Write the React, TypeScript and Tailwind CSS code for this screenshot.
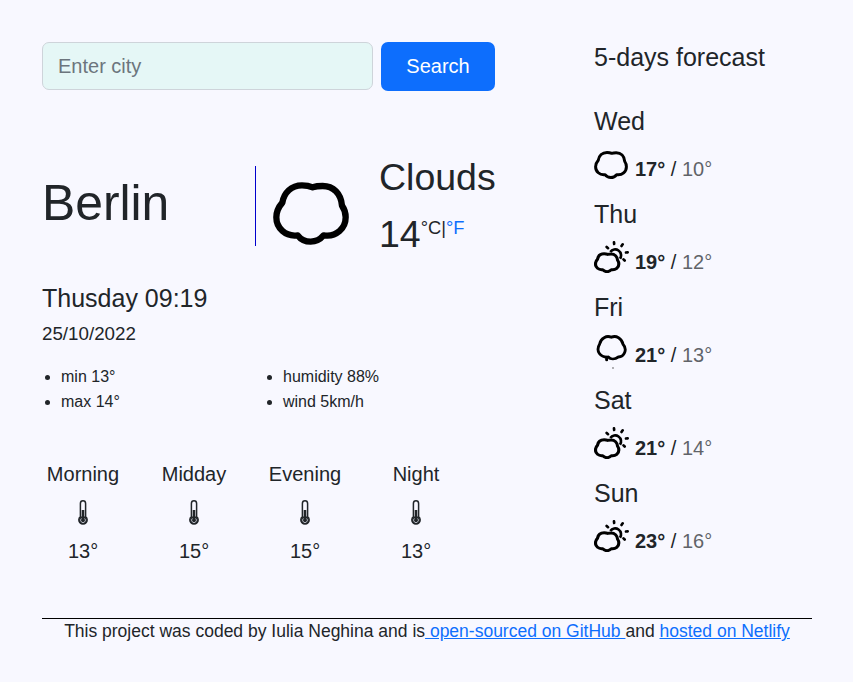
import React from "react";

const CLOUD =
  "M126 159C131 129 153 107 185 107C197 107 208 109 217 113C226 110 236 109 247 109C279 109 302 132 305 168C312 178 316 190 316 203C316 236 288 263 250 257C240 269 226 276 211 276C195 276 181 269 172 257C135 262 108 235 108 203C108 187 114 173 126 159Z";

function CloudIcon({ className, stroke }: { className: string; stroke: number }) {
  return (
    <svg viewBox="98 97 228 189" className={className} fill="none" stroke="#000" strokeWidth={stroke}>
      <path d={CLOUD} strokeLinejoin="round" />
    </svg>
  );
}

function CloudSunIcon() {
  return (
    <svg viewBox="0 0 105 96" className="block h-8 w-[35px]" fill="none" stroke="#000" strokeWidth="8">
      <path d="M49 33A17 17 0 1 1 78 53" />
      <path
        strokeLinecap="round"
        d="M60 4L60.500 9M38 18L42 21.500M86 10L82.500 15M96 34.500L101 34M88.500 55L92 58.500"
      />
      <g transform="translate(-32 4.500) scale(.337 .317)">
        <path d={CLOUD} strokeWidth="28" strokeLinejoin="round" />
      </g>
    </svg>
  );
}

function CloudDropIcon() {
  return (
    <svg viewBox="0 0 105 105" className="block h-[35px] w-[35px]" fill="none" stroke="#000">
      <path
        strokeWidth="8.500"
        strokeLinejoin="round"
        d="M17 27C20 10 38 0 52 7C66 0 84 10 87 28C101 43 91 66 73 66C63 73 50 74 43 66C19 68 4 49 17 27Z"
      />
      <path strokeWidth="9" strokeLinecap="round" d="M38 67V74" />
      <circle cx="57" cy="99" r="2.500" fill="#555" stroke="none" />
    </svg>
  );
}

function Thermometer() {
  return (
    <svg viewBox="0 0 10 25" className="-ml-px mb-[11px] mt-[11px] h-[25px] w-[10px]" fill="none" stroke="#212529">
      <path strokeWidth="1.500" d="M2.400 16.700V3.400a2.600 2.600 0 0 1 5.200 0V16.700a4.150 4.150 0 1 1-5.200 0Z" />
      <circle cx="5" cy="20.200" r="3.900" fill="#212529" stroke="none" />
      <path strokeWidth="2.600" d="M5 10V20" />
      <path stroke="#d8dae4" strokeWidth=".8" d="M3.400 18.400A2.400 2.400 0 1 0 6.600 18.400" />
    </svg>
  );
}

const days = [
  { day: "Wed", high: 17, low: 10, icon: "cloud" },
  { day: "Thu", high: 19, low: 12, icon: "sun" },
  { day: "Fri", high: 21, low: 13, icon: "drop" },
  { day: "Sat", high: 21, low: 14, icon: "sun" },
  { day: "Sun", high: 23, low: 16, icon: "sun" },
];

const parts = [
  { name: "Morning", temp: 13 },
  { name: "Midday", temp: 15 },
  { name: "Evening", temp: 15 },
  { name: "Night", temp: 13 },
];

export default function App() {
  return (
    <div className="h-[682px] w-[853px] overflow-hidden bg-[#f8f8ff] pl-[42px] pt-[42px] font-['Liberation_Sans',Arial,sans-serif] text-[#212529]">
      <div className="flex h-[576px]">
        <main className="w-[552px]">
          <form className="flex h-[49px] w-[453px] gap-2">
            <input
              placeholder="Enter city"
              className="h-12 w-[331px] rounded-[7px] border border-[#ced4da] bg-[#e5f7f6] px-[15px] text-[20px] placeholder:text-[#6c757d] placeholder:opacity-100"
            />
            <button type="button" className="h-[49px] w-[114px] rounded-[7px] bg-[#0d6efd] pb-0.5 text-[20px] text-white">
              Search
            </button>
          </form>

          <section className="mt-16 flex h-[128px]">
            <h1 className="mt-[18px] w-[213px] text-[49.800px] leading-[60px]">Berlin</h1>
            <div className="mt-[11px] h-20 border-l border-[#0000cd]" />
            <CloudIcon stroke={19} className="ml-[17px] mt-[27px] block h-[63px] w-[76px]" />
            <div className="ml-[30px]">
              <h2 className="text-[37.500px] leading-[44px]">Clouds</h2>
              <div className="mt-[13px] flex items-start">
                <span className="text-[37.500px] leading-[44px]">14</span>
                <span className="mt-[6px] text-[18.300px] leading-5">
                  °C|<a className="text-[#0d6efd]">°F</a>
                </span>
              </div>
            </div>
          </section>

          <h3 className="text-[25px] leading-[30px]">Thusday 09:19</h3>
          <p className="mt-[9px] text-[18.750px] leading-6">25/10/2022</p>

          <div className="mt-[18px] flex text-[16px] leading-[25px]">
            <ul className="w-[222px] list-disc pl-[19px]">
              <li>min 13°</li>
              <li>max 14°</li>
            </ul>
            <ul className="w-[222px] list-disc pl-[19px]">
              <li>humidity 88%</li>
              <li>wind 5km/h</li>
            </ul>
          </div>

          <div className="-ml-[14.500px] mt-[45px] grid w-[444px] grid-cols-4 text-center text-[20px] leading-[30px]">
            {parts.map((p) => (
              <div key={p.name} className="flex flex-col items-center">
                <span>{p.name}</span>
                <Thermometer />
                <span>{p.temp}°</span>
              </div>
            ))}
          </div>
        </main>

        <aside>
          <h3 className="text-[25px] leading-[30px]">5-days forecast</h3>
          <div className="mt-[34px]">
            {days.map((d) => (
              <div key={d.day} className="h-[93px]">
                <div className="text-[25px] leading-[30px]">{d.day}</div>
                <div className="flex h-[50px] items-start">
                  <div className="w-[41px]">
                    {d.icon === "cloud" && <CloudIcon stroke={20} className="mt-[15px] block h-7 w-[34px]" />}
                    {d.icon === "sun" && <div className="pt-3"><CloudSunIcon /></div>}
                    {d.icon === "drop" && <div className="pt-[13px]"><CloudDropIcon /></div>}
                  </div>
                  <div className="mt-[18px] text-[20px] leading-[30px]">
                    <strong>{d.high}°</strong> / <span className="opacity-70">{d.low}°</span>
                  </div>
                </div>
              </div>
            ))}
          </div>
        </aside>
      </div>

      <footer className="w-[770px] border-t border-black text-center text-[17.500px] leading-6">
        This project was coded by Iulia Neghina and is
        <a className="text-[#0d6efd] underline"> open-sourced on GitHub </a>
        and <a className="text-[#0d6efd] underline">hosted on Netlify</a>
      </footer>
    </div>
  );
}
